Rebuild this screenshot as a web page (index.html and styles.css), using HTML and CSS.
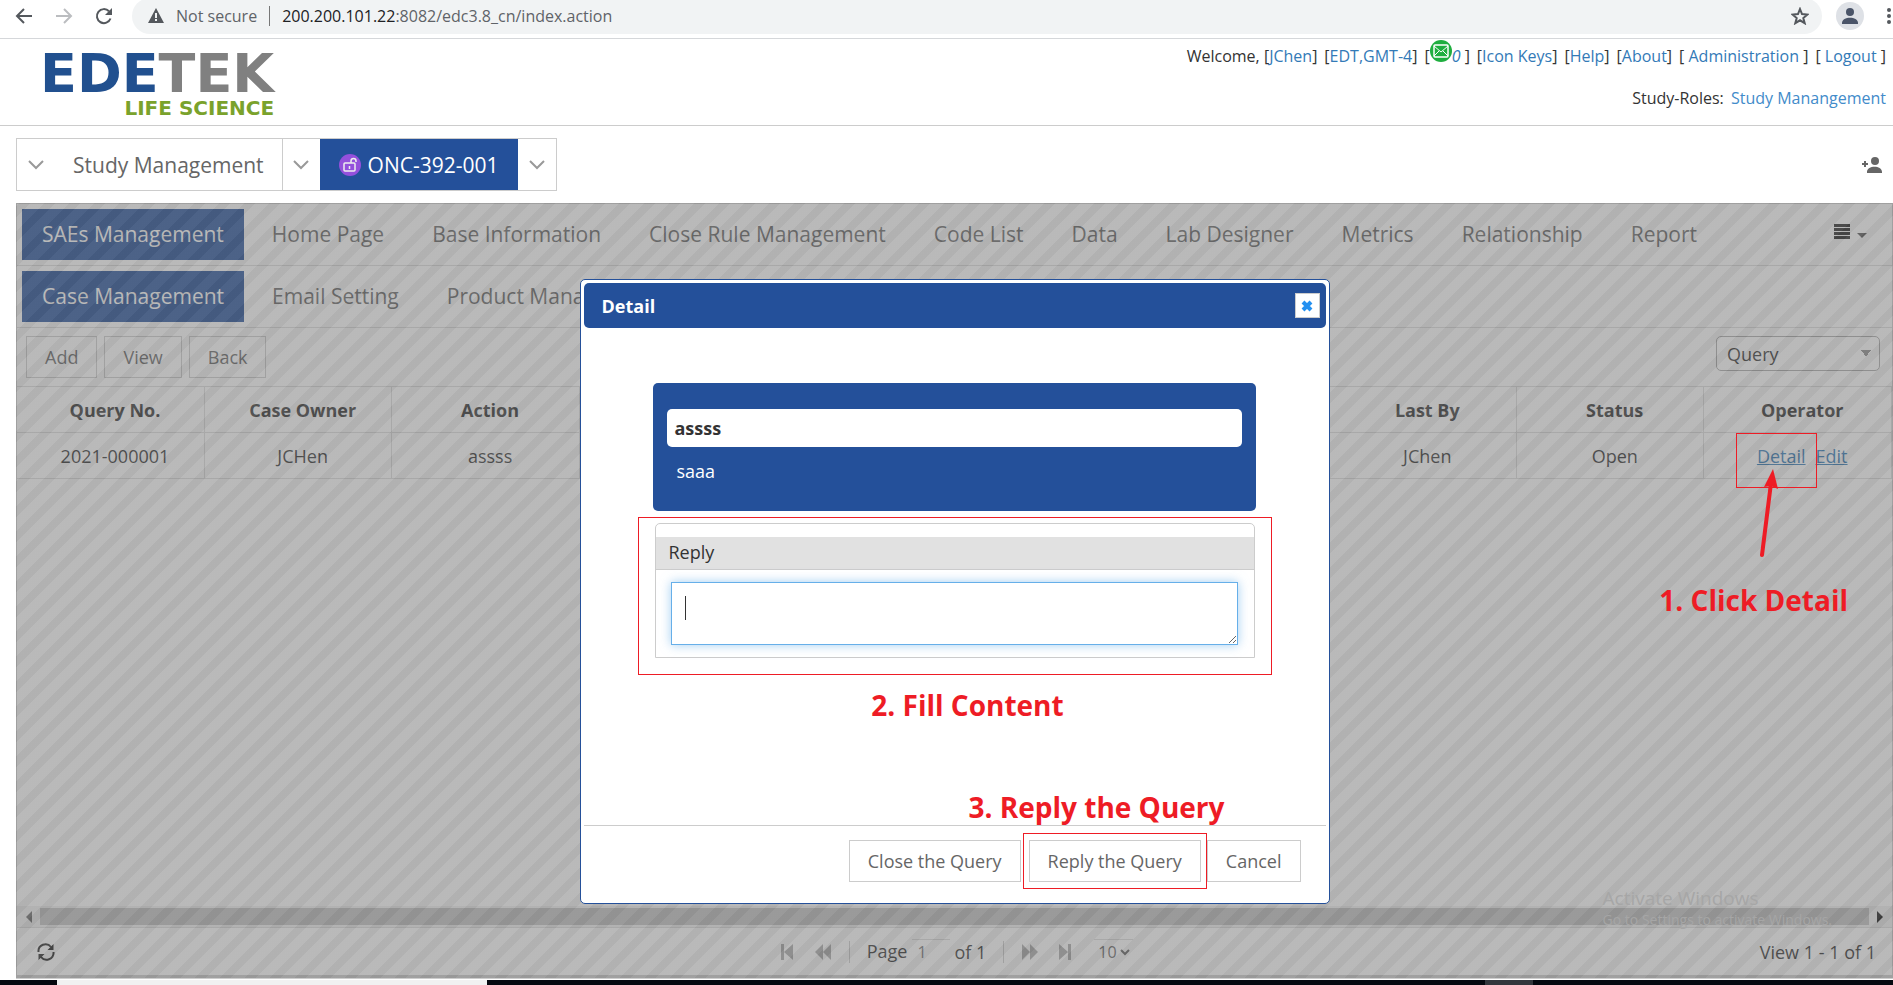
FILE: index.html
```html
<!DOCTYPE html>
<html lang="en">
<head>
<meta charset="utf-8">
<title>EDETEK Life Science</title>
<link rel="stylesheet" href="styles.css">
</head>
<body>
<div class="browser">
  <button class="nav-btn" aria-label="Back"><svg width="18" height="18" viewBox="0 0 18 18" fill="none" stroke="#54585d" stroke-width="2"><path d="M17 9H2M9 2L2 9l7 7"/></svg></button>
  <button class="nav-btn" aria-label="Forward"><svg width="18" height="18" viewBox="0 0 18 18" fill="none" stroke="#bbbdc0" stroke-width="2"><path d="M1 9h15M9 2l7 7-7 7"/></svg></button>
  <button class="nav-btn" aria-label="Reload"><svg width="18" height="18" viewBox="0 0 18 18" fill="none" stroke="#54585d" stroke-width="2"><path d="M15.5 11.5A7 7 0 1 1 14 4.300"/><path d="M17 1v7h-7z" fill="#54585d" stroke="none"/></svg></button>
  <div class="omnibox">
    <svg width="16" height="15" viewBox="0 0 16 15"><path d="M8 0L16 15H0z" fill="#54585d"/><path d="M7 5h2v5H7zM7 11h2v2H7z" fill="#f1f3f4"/></svg>
    <span class="secure">Not secure</span>
    <span class="url"><b>200.200.101.22</b>:8082/edc3.8_cn/index.action</span>
    <svg class="star" width="18" height="18" viewBox="0 0 18 18" fill="none" stroke="#54585d" stroke-width="2"><path d="M9 2l2 5 5.500.5-4.200 3.500 1.400 5.200L9 13.300l-4.700 2.900 1.400-5.200L1.500 7.500 7 7z"/></svg>
  </div>
  <svg class="avatar" width="28" height="28" viewBox="0 0 28 28"><circle cx="14" cy="14" r="14" fill="#dee1e6"/><circle cx="14" cy="10" r="4" fill="#4a5468"/><path d="M6 21c0-7 16-7 16 0v1H6z" fill="#4a5468"/></svg>
  <svg class="dots" width="8" height="18" viewBox="0 0 8 18" fill="#54585d"><circle cx="4" cy="3" r="2"/><circle cx="4" cy="9" r="2"/><circle cx="4" cy="15" r="2"/></svg>
</div>

<header class="header">
  <div class="logo"><div class="logo-name"><span>EDE</span>TEK</div><div class="logo-sub">LIFE SCIENCE</div></div>
  <div class="user">
    <div class="user-links">
      <span>Welcome, [<a href="#">JChen</a>]</span>
      <span>[<a href="#">EDT,GMT-4</a>]</span>
      <span class="mail">[<svg width="22" height="22" viewBox="0 0 22 22"><circle cx="11" cy="11" r="11" fill="#1fae3f"/><rect x="4" y="5" width="14" height="12" rx="1" fill="none" stroke="#fff" stroke-width="1.500"/><path d="M4 6l7 6 7-6M4 16l5-5M18 16l-5-5" fill="none" stroke="#fff"/></svg><a href="#"><i>0</i></a> ]</span>
      <span>[<a href="#">Icon Keys</a>]</span>
      <span>[<a href="#">Help</a>]</span>
      <span>[<a href="#">About</a>]</span>
      <span>[ <a href="#">Administration</a> ]</span>
      <span>[ <a href="#">Logout</a> ]</span>
    </div>
    <div class="roles">Study-Roles: <a href="#">Study Manangement</a></div>
  </div>
</header>

<div class="tabs-row">
  <div class="tabs">
    <button class="tab-chev" aria-label="Open menu"><svg width="16" height="10" viewBox="0 0 16 10"><path d="M1 1l7 7 7-7"/></svg></button>
    <button class="tab">Study Management</button>
    <button class="tab-chev line" aria-label="Study menu"><svg width="16" height="10" viewBox="0 0 16 10"><path d="M1 1l7 7 7-7"/></svg></button>
    <button class="tab active"><svg width="22" height="22" viewBox="0 0 22 22"><circle cx="11" cy="11" r="11" fill="#9450dc"/><g fill="none" stroke="#eee" stroke-width="1.500"><rect x="5" y="9" width="11" height="8" rx="1"/><path d="M12 9V7a2.500 2.500 0 0 1 5 0v1M10.500 12v3"/></g></svg>ONC-392-001</button>
    <button class="tab-chev" aria-label="Protocol menu"><svg width="16" height="10" viewBox="0 0 16 10"><path d="M1 1l7 7 7-7"/></svg></button>
  </div>
  <svg class="add-user" width="20" height="16" viewBox="0 0 20 16" fill="#666"><circle cx="13" cy="4" r="4"/><path d="M5 15c0-7 15-7 15 0v1H5zM2 4h2v2h2v2H4v2H2V8H0V6h2z"/></svg>
</div>

<main class="panel">
  <nav class="menu">
    <a class="item on" href="#">SAEs Management</a><a class="item" href="#">Home Page</a><a class="item" href="#">Base Information</a><a class="item" href="#">Close Rule Management</a><a class="item" href="#">Code List</a><a class="item" href="#">Data</a><a class="item" href="#">Lab Designer</a><a class="item" href="#">Metrics</a><a class="item" href="#">Relationship</a><a class="item" href="#">Report</a>
    <button class="more" aria-label="More"><svg width="34" height="16" viewBox="0 0 34 16" fill="#222"><path d="M0 0h16v3H0zM0 4h16v3H0zM0 8h16v3H0zM0 12h16v3H0z"/><path d="M23 9h10l-5 5z" fill="#555"/></svg></button>
  </nav>
  <nav class="menu">
    <a class="item on" href="#">Case Management</a><a class="item" href="#">Email Setting</a><a class="item" href="#">Product Management</a>
  </nav>
  <div class="toolbar">
    <button class="btn">Add</button><button class="btn">View</button><button class="btn">Back</button>
    <select class="filter" aria-label="List type"><option>Query</option></select>
  </div>
  <table class="grid">
    <thead><tr><th>Query No.</th><th>Case Owner</th><th>Action</th><th></th><th></th><th></th><th></th><th>Last By</th><th>Status</th><th>Operator</th></tr></thead>
    <tbody><tr><td>2021-000001</td><td>JCHen</td><td>assss</td><td></td><td></td><td></td><td></td><td>JChen</td><td>Open</td><td class="ops"><a href="#">Detail</a><a href="#">Edit</a></td></tr></tbody>
  </table>
  <div class="space"></div>
  <div class="scroll">
    <svg width="6" height="12" viewBox="0 0 6 12"><path d="M6 0v12L0 6z" fill="#666"/></svg>
    <div class="thumb"></div>
    <svg width="6" height="12" viewBox="0 0 6 12"><path d="M0 0v12l6-6z" fill="#111"/></svg>
  </div>
  <footer class="pager">
    <button class="icon refresh" aria-label="Refresh"><svg width="18" height="18" viewBox="0 0 18 18" fill="none" stroke="#222" stroke-width="2"><path d="M1.500 9A7 7 0 0 1 14 4M16.500 9A7 7 0 0 1 4 14"/><path d="M16.500 1v6h-6zM1.500 17v-6h6z" fill="#222" stroke="none"/></svg></button>
    <div class="pages">
      <button class="icon" aria-label="First"><svg width="14" height="16" viewBox="0 0 14 16"><path d="M1 0h3v16H1zM13 0v16L4 8z"/></svg></button>
      <button class="icon" aria-label="Previous"><svg width="17" height="16" viewBox="0 0 17 16"><path d="M8 0v16L0 8zM16 0v16L8 8z"/></svg></button>
      <span class="sep"></span>
      <label class="page">Page <input value="1"></label><span class="of">of 1</span>
      <span class="sep"></span>
      <button class="icon" aria-label="Next"><svg width="17" height="16" viewBox="0 0 17 16"><path d="M1 0v16l8-8zM9 0v16l8-8z"/></svg></button>
      <button class="icon" aria-label="Last"><svg width="14" height="16" viewBox="0 0 14 16"><path d="M0 0v16l9-8zM9 0h3v16H9z"/></svg></button>
      <select class="size" aria-label="Rows"><option>10</option></select>
    </div>
    <span class="view">View 1 - 1 of 1</span>
  </footer>
  <div class="overlay"></div>
  <div class="watermark"><div class="wm-big">Activate Windows</div><div>Go to Settings to activate Windows.</div></div>

  <div class="mark-detail"></div>
  <svg class="arrow" width="24" height="90" viewBox="0 0 24 90"><path d="M6 86L15 14" stroke="#ee1c25" stroke-width="4" stroke-linecap="round"/><path d="M17 0l5 20-7-3-7 1z" fill="#ee1c25"/></svg>
  <div class="note note-1">1. Click Detail</div>

  <section class="dialog" role="dialog" aria-labelledby="dlg-title">
    <div class="dlg-head"><h2 id="dlg-title">Detail</h2><button class="close" aria-label="Close"><svg width="12" height="12" viewBox="0 0 12 12"><path d="M2 2l8 8M10 2l-8 8" stroke="#2490f0" stroke-width="4"/></svg></button></div>
    <div class="dlg-body">
      <div class="query"><div class="query-title">assss</div><div class="query-text">saaa</div></div>
      <div class="mark-reply">
        <div class="reply"><label for="reply">Reply</label><div class="field"><textarea id="reply"></textarea><span class="caret"></span></div></div>
      </div>
      <div class="note note-2">2. Fill Content</div>
      <div class="note note-3">3. Reply the Query</div>
    </div>
    <div class="dlg-foot">
      <button class="btn">Close the Query</button>
      <div class="mark-btn"><button class="btn">Reply the Query</button></div>
      <button class="btn">Cancel</button>
    </div>
  </section>
</main>
<div class="taskbar"><span class="task light"></span><span class="task dark"></span></div>
</body>
</html>
```
FILE: styles.css
```css
* { box-sizing: border-box; }
body {
  margin: 0;
  height: 100vh;
  display: flex;
  flex-direction: column;
  overflow: hidden;
  background: #fff;
  color: #333;
  font: 18px/24px "Open Sans", "Noto Sans", sans-serif;
}
button, input, select, textarea { font: inherit; color: inherit; }
button { background: none; border: 0; padding: 0; }
svg { display: block; flex: none; }
a { color: #337ab7; text-decoration: none; }

.browser {
  display: flex;
  align-items: center;
  height: 39px;
  padding: 0 0 7px 15px;
  border-bottom: 1px solid #d5d7da;
}
.nav-btn { width: 40px; flex: none; }
.omnibox {
  flex: 1;
  display: flex;
  align-items: center;
  height: 36px;
  margin: 0 14px 0 -3px;
  padding: 0 13px 0 16px;
  border-radius: 18px;
  background: #f1f3f4;
  font: 16px/24px "Open Sans", sans-serif;
  color: #5f6368;
}
.secure { margin-left: 12px; padding-right: 12px; border-right: 1px solid #777; line-height: 20px; }
.url { flex: 1; margin-left: 12px; }
.url b { color: #202124; font-weight: 400; }
.dots { margin-left: 21px; }

.header {
  display: flex;
  justify-content: space-between;
  height: 87px;
  padding: 0 7px 0 40px;
  border-bottom: 1px solid #ccc;
}
.logo { padding-top: 16px; text-align: right; font-family: "DejaVu Sans", sans-serif; font-weight: 700; }
.logo-name { font-size: 54px; line-height: 38px; color: #808080; }
.logo-name span { color: #21508f; }
.logo-sub { margin-top: 5px; font-size: 20px; line-height: 20px; color: #7aa22c; }
.user { padding-top: 5px; text-align: right; font-size: 16px; }
.user-links { display: flex; justify-content: flex-end; gap: 7px; }
.mail { display: flex; white-space: pre; }
.mail svg { margin-top: -4px; }
.roles { margin-top: 18px; }
.roles a { margin-left: 3px; color: #428bca; }

.tabs-row {
  display: flex;
  justify-content: space-between;
  align-items: center;
  height: 77px;
  padding: 0 11px 0 16px;
}
.tabs { display: flex; height: 53px; border: 1px solid #ccc; }
.tab {
  display: flex;
  align-items: center;
  gap: 7px;
  padding: 0 18px;
  font-size: 21px;
  color: #666;
}
.tab.active { padding: 0 19px; background: #24509a; color: #fff; }
.tab-chev { display: flex; align-items: center; justify-content: center; width: 38px; }
.tab-chev.line { border-left: 1px solid #ccc; }
.tab-chev path { fill: none; stroke: #999; stroke-width: 2; }

.panel {
  position: relative;
  flex: 1;
  display: flex;
  flex-direction: column;
  margin-left: 16px;
  margin-bottom: 1px;
  border: 1px solid #ccc;
  border-bottom: 4px solid #ccc;
}
.menu {
  display: flex;
  align-items: center;
  gap: 8px;
  height: 62px;
  padding: 0 24px 0 5px;
  border-bottom: 1px solid #ddd;
}
.item { height: 51px; padding: 0 20px; font-size: 21px; line-height: 51px; color: #666; white-space: nowrap; }
.item.on { background: #24509a; color: #fff; }
.more { margin-left: auto; }
.more svg { margin-bottom: 6px; }
.toolbar { display: flex; gap: 7px; align-items: flex-start; height: 58px; padding: 8px 12px 0 9px; }
.btn { height: 42px; padding: 0 18px; border: 1px solid #ccc; color: #666; white-space: nowrap; background: #fff; }
.filter {
  width: 164px;
  height: 35px;
  margin-left: auto;
  padding: 0 10px;
  border: 1px solid #aaa;
  border-radius: 5px;
  appearance: none;
  background: linear-gradient(to bottom left, #888 50%, transparent 50%) right 13px center / 5px 7px no-repeat, linear-gradient(to bottom right, #888 50%, transparent 50%) right 8px center / 5px 7px no-repeat, #fff;
}
.grid { width: 100%; table-layout: fixed; border-collapse: collapse; border-top: 1px solid #ddd; text-align: center; }
.grid th, .grid td { height: 46px; padding: 0 0 0 9px; border: 1px solid #ddd; border-left-width: 0; }
.grid th { color: #333; font-weight: 700; }
.grid a { margin: 0 5px; text-decoration: underline; }
.space { flex: 1; }
.scroll { display: flex; align-items: center; gap: 8px; height: 22px; padding: 0 9px; background: #f1f1f1; border-bottom: 1px solid #ddd; }
.thumb { flex: 1; height: 17px; background: #c1c1c1; }
.pager { display: grid; grid-template-columns: 1fr auto 1fr; align-items: center; height: 47px; padding: 0 16px 0 20px; }
.pager .icon svg { fill: #aaa; }
.pager .refresh svg { fill: none; }
.pages { display: flex; align-items: center; gap: 21px; }
.sep { width: 1px; height: 22px; background: #ccc; margin: 0 -4px; }
.page { display: flex; gap: 5px; }
.page input { width: 38px; height: 26px; padding: 0 5px; border: 0; border-top: 1px solid #ddd; background: #fff; font-size: 16px; color: #777; }
.of { margin-left: -17px; }
.size { height: 26px; border: 0; border-top: 1px solid #ddd; background: none; font-size: 16px; color: #666; }
.view { text-align: right; }

/* Modal shade with diagonal stripes */
.overlay {
  position: absolute;
  inset: -1px -1px -3px -1px;
  background: linear-gradient(135deg, rgba(116, 116, 116, .5) 8%, rgba(100, 100, 100, .5) 8% 30%, rgba(116, 116, 116, .5) 30% 58%, rgba(100, 100, 100, .5) 58% 80%, rgba(116, 116, 116, .5) 80%) 0 0 / 25px 25px;
}
.watermark { position: absolute; right: 60px; bottom: 45px; font-size: 14px; line-height: 20px; color: #a6a6a6; }
.wm-big { font-size: 19px; line-height: 24px; }

.mark-detail { position: absolute; top: 229px; right: 75px; width: 81px; height: 55px; border: 1px solid #ee1c25; }
.arrow { position: absolute; top: 265px; right: 112px; }
.note { color: #ee1c25; font-size: 28px; line-height: 36px; font-weight: 700; white-space: nowrap; }
.note-1 { position: absolute; top: 378px; right: 44px; }

.dialog {
  position: absolute;
  top: 75px;
  left: 30%;
  width: 40%;
  min-height: 625px;
  display: flex;
  flex-direction: column;
  padding: 3px;
  border: 1px solid #24509a;
  border-radius: 5px;
  background: #fff;
}
.dlg-head {
  display: flex;
  justify-content: space-between;
  align-items: center;
  height: 45px;
  padding: 0 6px 0 18px;
  border-radius: 5px;
  background: #24509a;
  color: #fff;
}
.dlg-head h2 { margin: 0; font-size: 18px; font-weight: 700; }
.close { display: flex; align-items: center; justify-content: center; width: 25px; height: 25px; border: 1px solid #ccc; background: #fff; }
.dlg-body { flex: 1; display: flex; flex-direction: column; padding: 55px 54px 0; }
.query { height: 128px; margin: 0 16px 0 15px; padding: 26px 14px 0; border-radius: 5px; background: #24509a; }
.query-title { height: 38px; padding: 0 8px; border-radius: 5px; background: #fff; line-height: 38px; font-weight: 700; }
.query-text { padding: 12px 10px 0; color: #fff; }
.mark-reply { margin-top: 6px; height: 158px; padding: 5px 16px 0 16px; border: 1px solid #ee1c25; }
.reply { height: 135px; padding-top: 13px; border: 1px solid #ccc; border-radius: 5px 5px 0 0; }
.reply label { display: block; height: 33px; padding-left: 13px; border-bottom: 1px solid #ccc; background: #e1e1e1; line-height: 30px; }
.field { position: relative; padding: 12px 16px 0 15px; }
.field textarea {
  display: block;
  width: 100%;
  height: 63px;
  padding: 12px 14px;
  border: 1px solid #66afe9;
  outline: 0;
  box-shadow: 0 0 10px rgba(102, 175, 233, .6);
}
.caret { position: absolute; left: 29px; top: 26px; width: 1px; height: 24px; background: #333; }
.note-2 { align-self: center; margin-top: 12px; padding-left: 26px; }
.note-3 { align-self: flex-end; margin-top: auto; padding-right: 47px; }
.dlg-foot { display: flex; justify-content: flex-end; align-items: center; height: 75px; padding: 0 25px 5px 0; border-top: 1px solid #ccc; }
.mark-btn { margin-left: 2px; padding: 6px 5px; border: 1px solid #ee1c25; }

.taskbar { display: flex; height: 5px; background: #05080f; }
.task.light { width: 430px; margin-left: 57px; background: #f1f1f1; }
.task.dark { width: 48px; margin-left: auto; margin-right: 360px; background: #33363c; }
```
